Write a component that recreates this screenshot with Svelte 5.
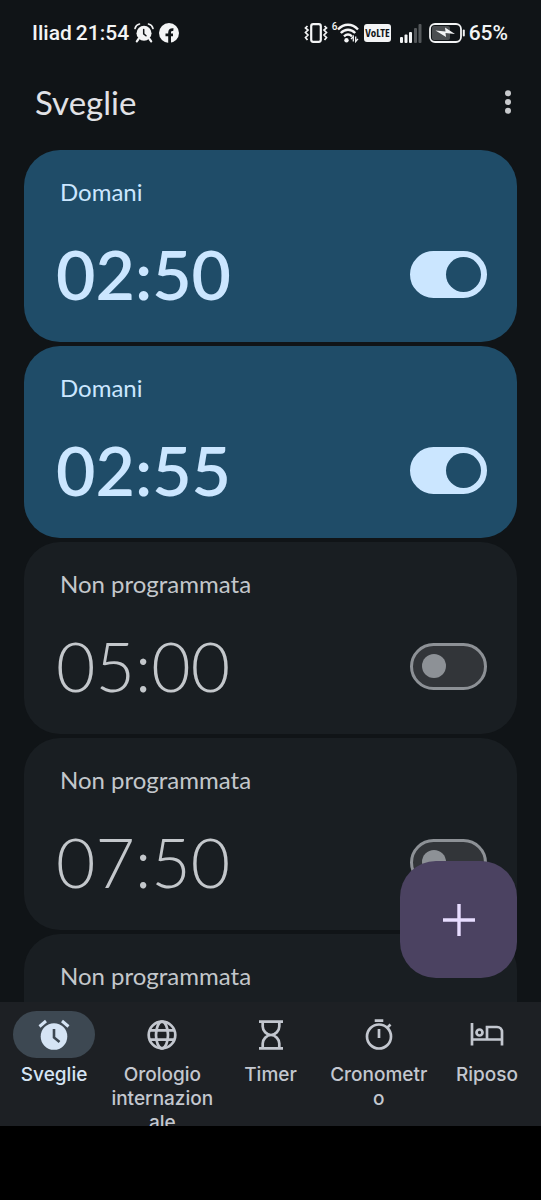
<script>
  let alarms = $state([
    { id: 1, time: '02:50', enabled: true },
    { id: 2, time: '02:55', enabled: true },
    { id: 3, time: '05:00', enabled: false },
    { id: 4, time: '07:50', enabled: false },
    { id: 5, time: '08:00', enabled: false }
  ]);

  const tabs = [
    { id: 'alarms', label: 'Sveglie' },
    { id: 'world', label: 'Orologio internazionale' },
    { id: 'timer', label: 'Timer' },
    { id: 'stopwatch', label: 'Cronometro' },
    { id: 'bedtime', label: 'Riposo' }
  ];

  let activeTab = $state('alarms');
</script>

<div class="screen">
  <header class="status-bar">
    <div class="status-left">
      <span>Iliad</span>
      <span>21:54</span>
      <svg class="status-alarm" width="20" height="20" viewBox="0 0 20 20" fill="currentColor">
        <path d="M1 5.500A6 6 0 0 1 5.500 1M14.500 1A6 6 0 0 1 19 5.500" fill="none" stroke="currentColor" stroke-width="1.600" stroke-linecap="round" />
        <circle cx="10" cy="10.300" r="7.500" />
        <path d="M4.500 16 2.800 18.300M15.500 16l1.700 2.300" stroke="currentColor" stroke-width="2.200" stroke-linecap="round" />
        <path d="M9.700 6.500v4.300l2.300 2" fill="none" stroke="#101417" stroke-width="1.500" stroke-linecap="round" />
      </svg>
      <svg width="20" height="20" viewBox="0 0 20 20">
        <circle cx="10" cy="10" r="10" fill="currentColor" />
        <path d="M10.600 20V9.500c0-2.300 1.200-3.200 3.800-2.900M6.500 11.800H14" fill="none" stroke="#101417" stroke-width="2.800" />
      </svg>
    </div>
    <div class="status-right">
      <svg width="24" height="20" viewBox="0 0 24 20" fill="none" stroke="currentColor">
        <rect x="7.200" y="1.200" width="9.600" height="17.600" rx="2" stroke-width="2.200" />
        <path d="M3.500 3 1.500 5l2.500 2-2.500 2.500L4 12l-2.500 2.500 2 2.500M20.500 3l2 2L20 7l2.500 2.500L20 12l2.500 2.500-2 2.500" stroke-width="1.700" />
      </svg>
      <span class="wifi">
        <span class="wifi-gen">6</span>
        <svg width="22" height="20" viewBox="0 0 22 20" fill="none" stroke="currentColor" stroke-width="2.400">
          <path d="M1 6.500C7 .200 15 .200 21 6.500M3.800 10c4.300-4.400 10.100-4.400 14.400 0M7 13.300c2.500-2.300 5.500-2.300 8 0" />
          <circle cx="9.500" cy="17.200" r="2.200" fill="currentColor" stroke="none" />
          <path d="M16.300 18.500v-5l-2.300 2.700M18.700 13.500v5l2.300-2.700" stroke-width="1.300" />
        </svg>
      </span>
      <span class="volte">VoLTE</span>
      <svg class="signal" width="22" height="19" viewBox="0 0 22 19" fill="currentColor">
        <rect x="0" y="13" width="3" height="6" rx="1" />
        <rect x="4.500" y="10.500" width="3" height="8.500" rx="1" />
        <rect x="9" y="8" width="3" height="11" rx="1" />
        <rect x="14" y="4" width="3" height="15" rx="1" opacity=".3" />
        <rect x="18.500" y="0" width="3" height="19" rx="1" opacity=".3" />
      </svg>
      <svg class="battery" width="37" height="20" viewBox="0 0 37 20">
        <rect x="3" y="3" width="18" height="14" rx="2" fill="#4b4e51" />
        <rect x="1" y="1" width="31" height="18" rx="5" fill="none" stroke="currentColor" stroke-width="1.800" />
        <path d="M34.800 7.500v5" stroke="currentColor" stroke-width="2" stroke-linecap="round" />
        <path d="m6.500 7.500 10 1-.500-4 10 6.500-9.500-1 .5 4z" fill="currentColor" />
      </svg>
      <span>65%</span>
    </div>
  </header>

  <div class="app-bar">
    <h1>Sveglie</h1>
    <button class="menu-button" aria-label="Altre opzioni">
      <svg width="8" height="24" viewBox="0 0 8 24" fill="currentColor">
        <circle cx="4" cy="3.300" r="3" />
        <circle cx="4" cy="12" r="3" />
        <circle cx="4" cy="20.700" r="3" />
      </svg>
    </button>
  </div>

  <main class="content">
    <div class="alarm-list">
      {#each alarms as alarm (alarm.id)}
        <section class="alarm-card" class:enabled={alarm.enabled}>
          <p class="alarm-day">{alarm.enabled ? 'Domani' : 'Non programmata'}</p>
          <div class="alarm-row">
            <label class="alarm-time" for="alarm-{alarm.id}">{alarm.time}</label>
            <input
              id="alarm-{alarm.id}"
              class="switch"
              type="checkbox"
              role="switch"
              bind:checked={alarm.enabled}
            />
          </div>
        </section>
      {/each}
    </div>

    <button class="fab" aria-label="Aggiungi sveglia">
      <svg width="32" height="32" viewBox="0 0 32 32" fill="none" stroke="currentColor" stroke-width="3.400">
        <path d="M16 0v32M0 16h32" />
      </svg>
    </button>
  </main>

  <nav class="bottom-nav">
    {#each tabs as tab (tab.id)}
      <button class="tab" class:active={activeTab === tab.id} onclick={() => (activeTab = tab.id)}>
        <span class="tab-icon">
          {#if tab.id === 'alarms'}
            <svg width="32" height="32" viewBox="0 0 32 32" fill="none" stroke="currentColor">
              <circle cx="16" cy="17.500" r="13.300" fill="currentColor" stroke="none" />
              <path d="M1.500 7.500 8 2M30.500 7.500 24 2" stroke-width="3" />
              <path d="M16 10v8.500l5.500 4.500" stroke="#3d4852" stroke-width="2.600" />
            </svg>
          {:else if tab.id === 'world'}
            <svg width="32" height="32" viewBox="0 0 32 32" fill="none" stroke="currentColor" stroke-width="2.700">
              <circle cx="16" cy="16" r="13.300" />
              <ellipse cx="16" cy="16" rx="6" ry="13.300" />
              <path d="M3.500 11.300h25M3.500 20.700h25" />
            </svg>
          {:else if tab.id === 'timer'}
            <svg width="32" height="32" viewBox="0 0 32 32" fill="none" stroke="currentColor" stroke-width="2.700">
              <path d="M4 2.600h24M4 29.400h24M7.700 3v4.500c0 4 3.800 8.500 8.300 8.500s8.300-4.500 8.300-8.500V3M7.700 29v-4.500c0-4 3.800-8.500 8.300-8.500s8.300 4.500 8.300 8.500V29" />
            </svg>
          {:else if tab.id === 'stopwatch'}
            <svg width="32" height="32" viewBox="0 0 32 32" fill="none" stroke="currentColor" stroke-width="2.700">
              <circle cx="16" cy="17.500" r="12" />
              <path d="M11.700 1.700h8.600M16 10v9M24 9l3.500-3.500" />
            </svg>
          {:else}
            <svg width="34" height="32" viewBox="0 0 34 32" fill="none" stroke="currentColor" stroke-width="2.700">
              <path d="M2 4v22.500M2 20.500h30M32 26.500V13c0-3-2-5-5-5H17v12.500" />
              <circle cx="9.500" cy="13.500" r="3" />
            </svg>
          {/if}
        </span>
        <span class="tab-label">{tab.label}</span>
      </button>
    {/each}
  </nav>
  <div class="system-nav"></div>
</div>

<style>
  :global(body) {
    margin: 0;
    background: #000;
  }

  .screen {
    display: flex;
    flex-direction: column;
    height: 100vh;
    background: #101417;
    color: #e1e2e6;
    font-family: Lato, 'Liberation Sans', sans-serif;
  }

  .status-bar {
    display: flex;
    flex-shrink: 0;
    justify-content: space-between;
    align-items: center;
    height: 66px;
    padding: 0 33px 0 32px;
    color: #f3f4f5;
    font-family: Roboto, 'Liberation Sans', sans-serif;
    font-size: 21px;
    font-weight: 500;
  }

  .status-left,
  .status-right,
  .wifi {
    display: flex;
    align-items: center;
  }

  .status-left {
    gap: 4px;
  }

  .status-alarm {
    margin: 0 1px;
  }

  .wifi {
    align-items: flex-start;
    margin-left: 4px;
  }

  .wifi-gen {
    font-size: 10px;
    line-height: 8px;
  }

  .volte {
    margin-left: 5px;
    padding: 0 1px;
    border-radius: 3px;
    background: #f3f4f5;
    color: #101417;
    font-family: 'Open Sans Condensed', Roboto, sans-serif;
    font-size: 11px;
    font-weight: 800;
    line-height: 18px;
  }

  .signal {
    margin-left: 9px;
  }

  .battery {
    margin: 0 3px 0 7px;
  }

  .app-bar {
    display: flex;
    flex-shrink: 0;
    justify-content: space-between;
    align-items: center;
    height: 72px;
    padding: 0 25px 12px 35px;
  }

  h1 {
    margin: 0;
    font-size: 33px;
    font-weight: 400;
    line-height: 40px;
  }

  .menu-button {
    display: flex;
    padding: 4px;
    border: none;
    background: none;
    color: #c8cacd;
    cursor: pointer;
  }

  .content {
    position: relative;
    flex: 1;
    min-height: 0;
    overflow: hidden;
  }

  .alarm-list {
    display: flex;
    flex-direction: column;
    gap: 4px;
    padding: 0 24px;
  }

  .alarm-card {
    box-sizing: border-box;
    min-height: 192px;
    padding: 28px 30px 28px 36px;
    border-radius: 36px;
    background: #191e22;
    color: #c3c7cb;
  }

  .alarm-card.enabled {
    background: #1f4c68;
    color: #cbe6ff;
  }

  .alarm-day {
    margin: 0 0 28px;
    font-size: 24px;
    line-height: 28px;
  }

  .alarm-row {
    display: flex;
    justify-content: space-between;
    align-items: center;
  }

  .alarm-time {
    margin-left: -4px;
    font-size: 68px;
    font-weight: 300;
    line-height: 80px;
  }

  .enabled .alarm-time {
    font-weight: 600;
  }

  .switch {
    display: flex;
    align-items: center;
    box-sizing: border-box;
    appearance: none;
    width: 77px;
    height: 47px;
    margin: 0;
    padding: 0 9px;
    border: 3px solid #8d9196;
    border-radius: 24px;
    background: #323539;
    cursor: pointer;
  }

  .switch::before {
    content: '';
    width: 24px;
    height: 24px;
    border-radius: 50%;
    background: #8d9196;
  }

  .switch:checked {
    justify-content: flex-end;
    padding: 0 3px;
    border-color: #cbe6ff;
    background: #cbe6ff;
  }

  .switch:checked::before {
    width: 35px;
    height: 35px;
    background: #1f4c68;
  }

  .fab {
    position: absolute;
    right: 24px;
    bottom: 24px;
    display: flex;
    justify-content: center;
    align-items: center;
    width: 117px;
    height: 117px;
    border: none;
    border-radius: 36px;
    background: #4b4261;
    color: #e8ddff;
    cursor: pointer;
  }

  .bottom-nav {
    display: flex;
    flex-shrink: 0;
    height: 124px;
    overflow: hidden;
    background: #1d2024;
  }

  .tab {
    display: flex;
    flex: 1 1 0;
    flex-direction: column;
    align-items: center;
    gap: 5px;
    min-width: 0;
    padding: 9px 2px 0;
    border: none;
    background: none;
    color: #c3c7cf;
    font-family: Inter, 'Liberation Sans', sans-serif;
    font-size: 19px;
    font-weight: 500;
    line-height: 24px;
    cursor: pointer;
  }

  .tab.active {
    color: #d5e4f4;
  }

  .tab-icon {
    display: flex;
    flex-shrink: 0;
    justify-content: center;
    align-items: center;
    width: 82px;
    height: 47px;
    border-radius: 24px;
  }

  .active .tab-icon {
    background: #3d4852;
  }

  .tab-label {
    max-width: 100%;
    overflow-wrap: anywhere;
  }

  .system-nav {
    flex-shrink: 0;
    height: 74px;
    background: #000;
  }
</style>
